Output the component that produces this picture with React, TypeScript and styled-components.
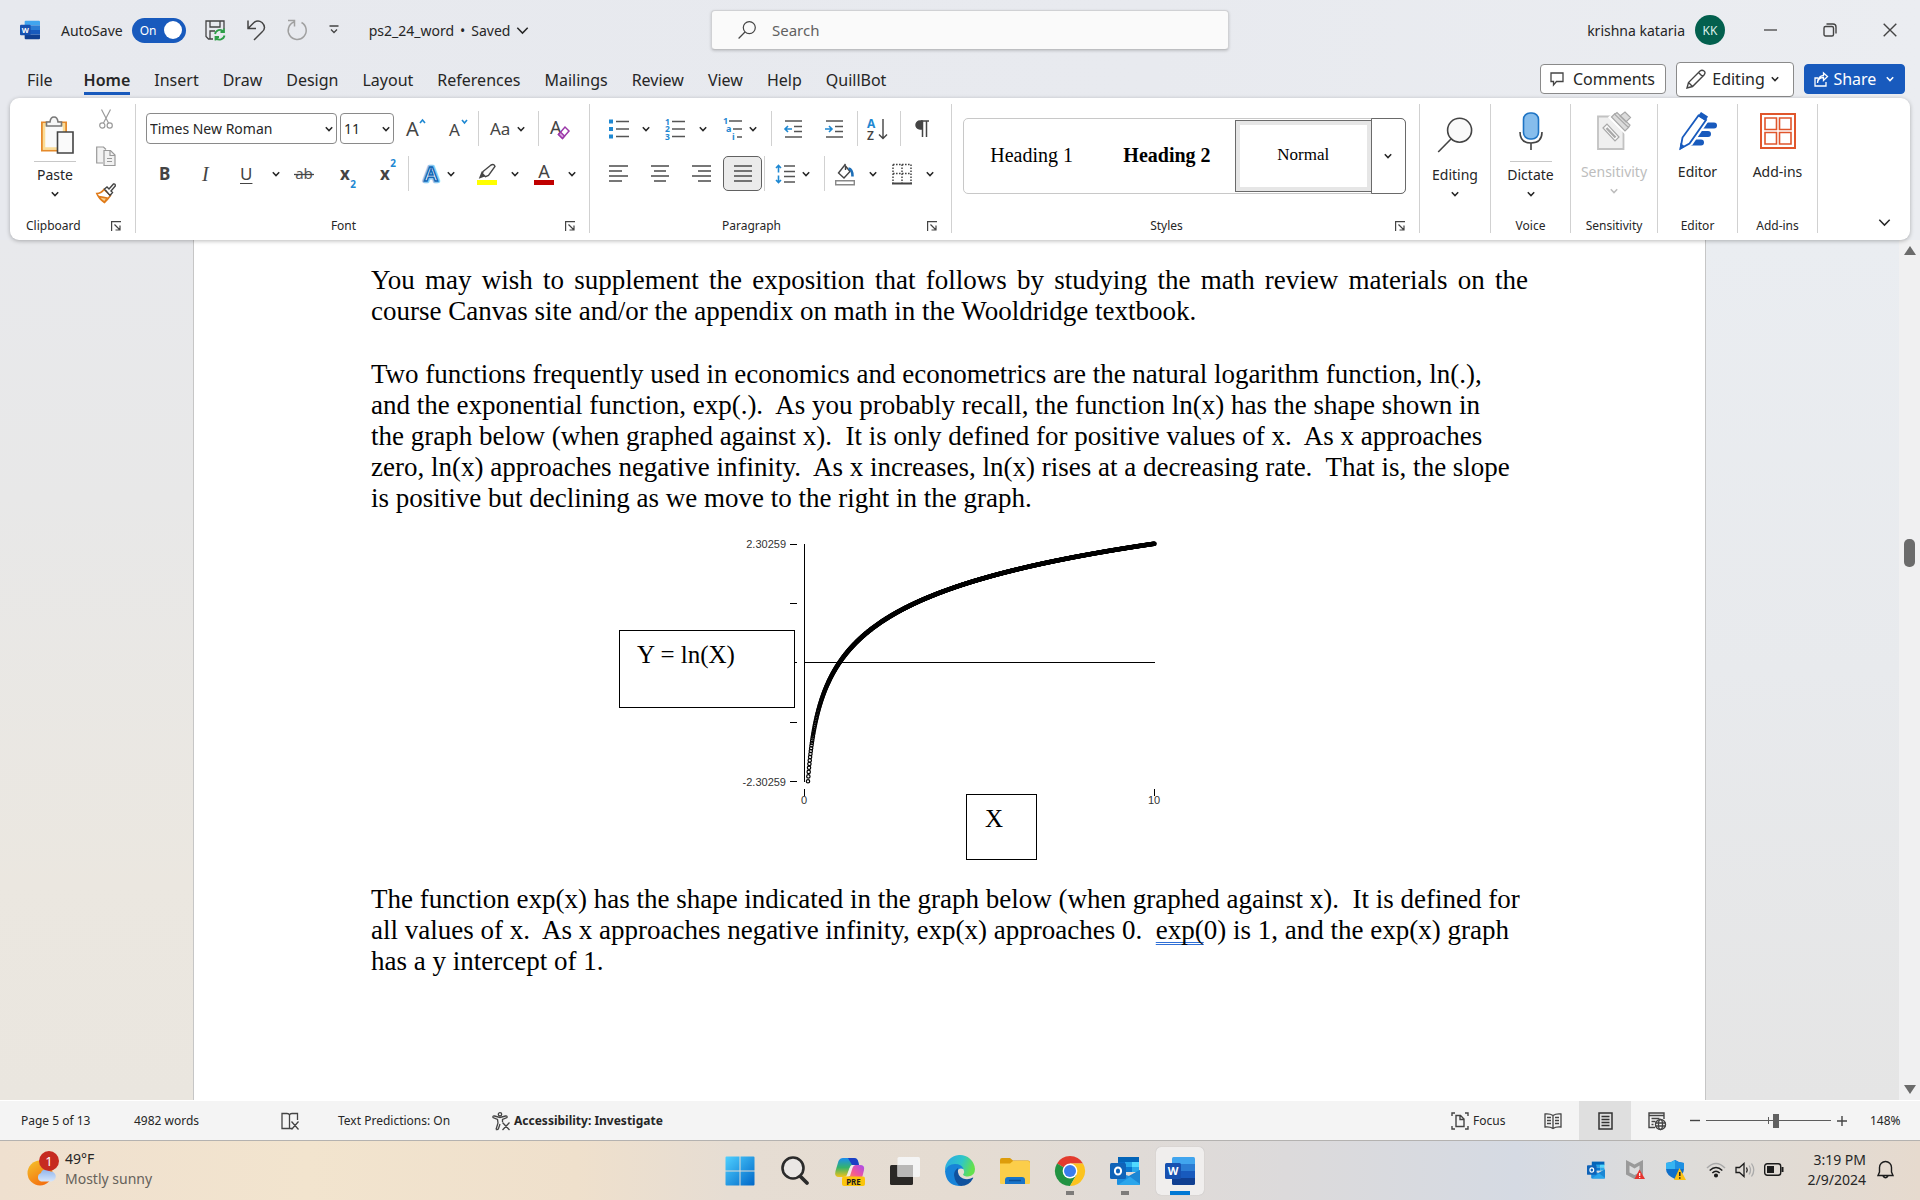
import React from "react";
import styled, { createGlobalStyle, css } from "styled-components";

const ui = `"Noto Sans", "Open Sans", sans-serif`;
const serif = `"Liberation Serif", "Times New Roman", serif`;
const ink = "#262626";
const blue = "#185abd";

const Global = createGlobalStyle`
  *, *::before, *::after { box-sizing: border-box; }
  body { margin: 0; font-family: ${ui}; font-size: 14px; color: ${ink}; }
  button, input, select { font: inherit; color: inherit; margin: 0; padding: 0; border: 0; background: none; }
  svg { display: block; flex: none; overflow: visible; }
`;

const Desktop = styled.div`
  display: flex;
  flex-direction: column;
  height: 100vh;
  overflow: hidden;
  background: linear-gradient(90deg, #e7e9ee 0%, #e8eaef 60%, #ebedf1 100%);
`;

/* ---------- title bar ---------- */
const TitleBar = styled.header`
  display: grid;
  grid-template-columns: 711px minmax(200px, 518px) 1fr;
  align-items: center;
  height: 60px;
  flex: none;
`;
const TitleLeft = styled.div`
  display: flex;
  align-items: center;
  padding-left: 20px;
`;
const TitleRight = styled.div`
  display: flex;
  align-items: center;
  justify-content: flex-end;
  padding-right: 23px;
`;
const SwitchLabel = styled.label`
  display: flex;
  align-items: center;
  gap: 9px;
  margin: 0 19px 0 21px;
`;
const Switch = styled.span`
  display: flex;
  align-items: center;
  justify-content: space-between;
  width: 54px;
  height: 25px;
  padding: 0 4px 0 8px;
  border-radius: 13px;
  background: ${blue};
  color: #fff;
  font-size: 12px;
`;
const SwitchInput = styled.input`
  appearance: none;
  width: 18px;
  height: 18px;
  border-radius: 9px;
  background: #fff;
`;
const IconButton = styled.button<{ $w?: number; $h?: number; $ml?: number }>`
  display: flex;
  align-items: center;
  justify-content: center;
  width: ${(p) => p.$w ?? 20}px;
  height: ${(p) => p.$h ?? 35}px;
  margin-left: ${(p) => p.$ml ?? 0}px;
  flex: none;
`;
const FileButton = styled.button`
  display: flex;
  align-items: center;
  gap: 6px;
  margin-left: 30px;
  white-space: nowrap;
`;
const SearchBox = styled.label`
  display: flex;
  align-items: center;
  gap: 16px;
  height: 40px;
  padding: 0 26px;
  border: 1px solid #d0d1d4;
  border-bottom-color: #bdbec1;
  border-radius: 4px;
  background: #fafafa;
  box-shadow: 0 1px 3px rgba(0, 0, 0, 0.18);
`;
const SearchInput = styled.input`
  flex: 1;
  min-width: 0;
  outline: 0;
  font-size: 15px;
  &::placeholder { color: #616161; opacity: 1; }
`;
const Avatar = styled.span`
  display: grid;
  place-items: center;
  width: 30px;
  height: 30px;
  margin-left: 10px;
  border-radius: 50%;
  background: #03604e;
  color: #d8efe9;
  font-size: 12px;
`;

/* ---------- tabs ---------- */
const TabBar = styled.div`
  display: flex;
  align-items: center;
  justify-content: space-between;
  height: 38px;
  padding: 0 15px 0 27px;
  flex: none;
`;
const Tabs = styled.nav`
  display: flex;
  gap: 24px;
`;
const Tab = styled.button<{ $active?: boolean; $first?: boolean }>`
  height: 38px;
  padding-top: 1px;
  font-size: 16px;
  margin-right: ${(p) => (p.$first ? 7 : 0)}px;
  ${(p) =>
    p.$active &&
    css`
      font-weight: 600;
      background: linear-gradient(${blue}, ${blue}) 0 32px / 100% 3px no-repeat;
    `}
`;
const Actions = styled.div`
  display: flex;
  align-items: center;
  gap: 10px;
`;
const Action = styled.button<{ $w: number; $tall?: boolean; $primary?: boolean }>`
  display: flex;
  align-items: center;
  justify-content: space-between;
  width: ${(p) => p.$w}px;
  height: ${(p) => (p.$tall ? 35 : 30)}px;
  padding: 0 ${(p) => (p.$tall ? 14 : 10)}px 0 9px;
  border: 1px solid ${(p) => (p.$primary ? blue : "#8a8a8a")};
  border-radius: 4px;
  background: ${(p) => (p.$primary ? blue : "#fff")};
  color: ${(p) => (p.$primary ? "#fff" : ink)};
  font-size: 16px;
`;

/* ---------- ribbon ---------- */
const Ribbon = styled.section`
  position: relative;
  z-index: 1;
  display: flex;
  height: 142px;
  margin: 0 10px;
  padding: 6px 0 7px;
  border-radius: 9px;
  background: #fff;
  box-shadow: 0 1px 4px rgba(0, 0, 0, 0.28);
  flex: none;
`;
const Group = styled.div<{ $w?: number }>`
  display: flex;
  flex-direction: column;
  justify-content: space-between;
  ${(p) => (p.$w ? `width: ${p.$w}px; flex: none;` : "flex: 1; min-width: 0;")}
  border-right: 1px solid #d1d1d1;
`;
const GroupFoot = styled.div<{ $launcher?: boolean }>`
  display: flex;
  align-items: center;
  height: 14px;
  padding-right: ${(p) => (p.$launcher ? 14 : 0)}px;
  font-size: 12px;
  line-height: 14px;
  white-space: nowrap;
`;
const FootName = styled.span<{ $left?: boolean }>`
  flex: 1;
  text-align: ${(p) => (p.$left ? "left" : "center")};
  padding: 0 ${(p) => (p.$left ? 0 : 14)}px 0 ${(p) => (p.$left ? 16 : 0)}px;
`;
const PlainName = styled.span`
  flex: 1;
  text-align: center;
`;
const Rows = styled.div`
  display: flex;
  flex-direction: column;
  gap: 10px;
  padding-top: 7px;
`;
const Row = styled.div`
  display: flex;
  align-items: center;
  height: 35px;
`;
const Bar = styled.span<{ $ml: number }>`
  width: 1px;
  height: 35px;
  margin-left: ${(p) => p.$ml}px;
  background: #d1d1d1;
`;
const Tool = styled.button<{ $w?: number; $ml: number }>`
  display: flex;
  align-items: center;
  justify-content: space-between;
  width: ${(p) => p.$w ?? 20}px;
  height: 35px;
  margin-left: ${(p) => p.$ml}px;
  font-size: 17px;
  line-height: 20px;
  flex: none;
  white-space: nowrap;
`;
const Pressed = styled(Tool)`
  justify-content: center;
  border: 1px solid #616161;
  border-radius: 5px;
  background: #ebebeb;
`;
const Glyph = styled.span<{ $bold?: boolean; $italic?: boolean; $underline?: boolean }>`
  font-weight: ${(p) => (p.$bold ? 700 : 400)};
  ${(p) => p.$italic && `font-family: ${serif}; font-style: italic; font-size: 20px;`}
  ${(p) => p.$underline && "text-decoration: underline; text-underline-offset: 3px;"}
  color: #444;
`;
const Script = styled.span<{ $up?: boolean }>`
  align-self: ${(p) => (p.$up ? "flex-start" : "flex-end")};
  color: #1e88d2;
  font-size: 10px;
  font-weight: 700;
  line-height: 14px;
`;
const ComboWrap = styled.label<{ $w: number; $ml: number }>`
  display: grid;
  align-items: center;
  width: ${(p) => p.$w}px;
  height: 31px;
  margin-left: ${(p) => p.$ml}px;
  border: 1px solid #8a8a8a;
  border-radius: 4px;
  & > * { grid-area: 1 / 1; }
  & > svg { justify-self: end; margin-right: 3px; pointer-events: none; }
`;
const Combo = styled.select`
  appearance: none;
  width: 100%;
  height: 100%;
  padding-left: 3px;
`;
const ClipArea = styled.div`
  display: flex;
  gap: 20px;
  padding-left: 24px;
`;
const ClipSide = styled.div`
  display: flex;
  flex-direction: column;
  gap: 7px;
`;
const Big = styled.button<{ $muted?: boolean }>`
  display: flex;
  flex-direction: column;
  align-items: center;
  color: ${(p) => (p.$muted ? "#bdbdbd" : ink)};
  white-space: nowrap;
`;
const Art = styled.span<{ $low?: boolean; $rule?: boolean; $gap?: boolean }>`
  display: flex;
  align-items: center;
  justify-content: center;
  width: 42px;
  height: 58px;
  padding: ${(p) => (p.$low ? "5px 0 0" : "0 0 3px")};
  border-bottom: 1px solid ${(p) => (p.$rule ? "#c8c8c8" : "transparent")};
  margin-bottom: ${(p) => (p.$gap ? 3 : 0)}px;
`;
const BigText = styled.span`
  margin-bottom: 5px;
  line-height: 20px;
`;
const Gallery = styled.div`
  display: flex;
  height: 76px;
  margin: 14px 13px 0 11px;
  border: 1px solid #c8c8c8;
  border-radius: 5px;
`;
const StyleItem = styled.button<{ $bold?: boolean; $selected?: boolean }>`
  flex: 1;
  min-width: 0;
  padding-bottom: 2px;
  font-family: ${serif};
  font-size: ${(p) => (p.$selected ? 17 : 20)}px;
  font-weight: ${(p) => (p.$bold ? 700 : 400)};
  color: #000;
  ${(p) =>
    p.$selected &&
    css`
      margin: 1px 0;
      border: 1px solid #6a6a6a;
      box-shadow: inset 0 0 0 4px #e6e6e6;
    `}
`;
const GalleryMore = styled.button`
  display: grid;
  place-items: center;
  width: 35px;
  margin: -1px;
  border: 1px solid #6a6a6a;
  border-radius: 0 5px 5px 0;
`;
const Collapse = styled.button`
  display: flex;
  align-items: flex-end;
  justify-content: flex-end;
  width: 92px;
  padding: 0 19px 4px 0;
`;

/* ---------- document ---------- */
const Workspace = styled.main`
  display: flex;
  flex: 1;
  min-height: 0;
  overflow: hidden;
  background:
    linear-gradient(180deg, #e8e9ec 0%, #e8e8e8 30%, #ebe7e0 75%, #eae6df 100%) 0 0 / 50% 100% no-repeat,
    linear-gradient(180deg, #eaedf1 0%, #e8eaed 50%, #e5e5e5 100%) 100% 0 / 50% 100% no-repeat;
`;
const Page = styled.article`
  flex: 1;
  margin: 0 193px;
  padding: 25px 177px 0;
  border: solid #c6c6c6;
  border-width: 0 1px;
  background: #fff;
  color: #000;
  font-family: ${serif};
  font-size: 27px;
  line-height: 31px;
`;
const Para = styled.p<{ $spaced?: boolean }>`
  margin: 0 0 ${(p) => (p.$spaced ? 32 : 0)}px;
`;
const Line = styled.span<{ $justified?: boolean }>`
  display: block;
  ${(p) =>
    p.$justified
      ? "text-align: justify; text-align-last: justify;"
      : "white-space: pre;"}
`;
const Grammar = styled.span`
  text-decoration: underline double #2f6fd6 1px;
  text-decoration-skip-ink: none;
  text-underline-offset: 3px;
`;
const Figure = styled.figure`
  margin: 0;
  padding: 6px 0 14px 229px;
`;
const Scroll = styled.div`
  display: flex;
  flex-direction: column;
  align-items: center;
  width: 21px;
  padding: 6px 0;
  background: #f0f0f1;
`;
const Thumb = styled.div`
  width: 11px;
  height: 28px;
  margin: 284px 0 auto;
  border-radius: 5px;
  background: #6b6b6b;
`;

/* ---------- status bar ---------- */
const StatusBar = styled.footer`
  display: flex;
  align-items: center;
  justify-content: space-between;
  height: 41px;
  border-top: 1px solid #fff;
  border-bottom: 1px solid #b4b2b0;
  background: #f4f4f4;
  font-size: 12px;
  flex: none;
`;
const StatusSide = styled.div`
  display: flex;
  align-items: center;
  height: 100%;
  white-space: nowrap;
`;
const StatusItem = styled.button<{ $ml?: number; $bold?: boolean; $w?: number }>`
  display: flex;
  align-items: center;
  gap: 4px;
  margin-left: ${(p) => p.$ml ?? 0}px;
  font-weight: ${(p) => (p.$bold ? 700 : 400)};
  ${(p) => p.$w && `width: ${p.$w}px;`}
`;
const ViewButton = styled.button<{ $on?: boolean }>`
  display: grid;
  place-items: center;
  width: 52px;
  height: 100%;
  background: ${(p) => (p.$on ? "#dfdfdf" : "none")};
`;
const Zoom = styled.input`
  appearance: none;
  width: 125px;
  height: 14px;
  margin: 0 6px;
  background:
    linear-gradient(#5c5c5c, #5c5c5c) 50% 50% / 1px 7px no-repeat,
    linear-gradient(#5c5c5c, #5c5c5c) 0 50% / 100% 1px no-repeat;
  &::-webkit-slider-thumb {
    appearance: none;
    width: 6px;
    height: 14px;
    background: #616161;
  }
`;

/* ---------- taskbar ---------- */
const Taskbar = styled.footer`
  display: grid;
  grid-template-columns: 1fr auto 1fr;
  align-items: center;
  height: 59px;
  flex: none;
  background: linear-gradient(90deg, #efe0cf 0%, #f2e4ce 16%, #efe0cc 30%, #e6ddd3 38%, #e5dcd2 50%, #dcdadb 67%, #d5dae3 79%, #dedcd9 88%, #e6dace 100%);
`;
const Weather = styled.button`
  display: flex;
  align-items: center;
  gap: 5px;
  padding: 0 0 3px 26px;
  text-align: left;
  line-height: 20px;
`;
const Stack = styled.span`
  display: flex;
  flex-direction: column;
`;
const Soft = styled.span`
  color: #66615a;
`;
const Apps = styled.div`
  display: flex;
  gap: 7px;
`;
const AppButton = styled.button<{ $open?: boolean; $active?: boolean }>`
  display: flex;
  align-items: center;
  justify-content: center;
  width: 48px;
  height: 48px;
  border-radius: 5px;
  ${(p) =>
    p.$open &&
    "background: linear-gradient(#7e7c7a, #7e7c7a) 50% 100% / 8px 4px no-repeat;"}
  ${(p) =>
    p.$active &&
    "background: linear-gradient(#0078d4, #0078d4) 50% 100% / 20px 4px no-repeat, #f0eeed; box-shadow: 0 0 1px #aaa;"}
`;
const Tray = styled.div`
  display: flex;
  align-items: center;
  justify-content: flex-end;
  padding: 0 26px 2px 0;
`;
const Clock = styled.button`
  margin: 0 11px 0 24px;
  text-align: right;
  line-height: 20px;
`;

/* ---------- icons ---------- */
const Chevron = ({ size = 8, color = "#262626" }: { size?: number; color?: string }) => (
  <svg width={size} height={size} viewBox="0 0 8 8" fill="none" stroke={color} strokeWidth={size > 8 ? 0.9 : 1.5}>
    <path d="M.8 2.3 4 5.6l3.2-3.3" />
  </svg>
);
const Ico = ({ w = 20, h = 20, box, children, sw = 1.4, color = "#444" }: any) => (
  <svg width={w} height={h} viewBox={box ?? `0 0 ${w} ${h}`} fill="none" stroke={color} strokeWidth={sw}>
    {children}
  </svg>
);
const LauncherIcon = () => (
  <Ico w={10} h={10} sw={1.2}>
    <path d="M.6 10V.6H10M3.5 3.5l5 5M9 4.5V9H4.5" />
  </Ico>
);
const letter = { stroke: "none", fontFamily: ui, fontWeight: 700 } as const;

const WordIcon = ({ size = 20 }) => (
  <svg width={size} height={size} viewBox="0 0 30 30">
    <path d="M7 2.500Q7 1 8.500 1h20Q30 1 30 2.500V8H7z" fill="#41a5ee" />
    <path d="M7 8h23v7H7z" fill="#2b7cd3" />
    <path d="M7 15h23v7H7z" fill="#185abd" />
    <path d="M7 22h23v5.500Q30 29 28.500 29h-20Q7 29 7 27.500z" fill="#103f91" />
    <rect y="7" width="16" height="16" rx="1.500" fill="#1751b0" />
    <text x="8" y="19" fontSize="11" textAnchor="middle" fill="#fff" {...letter}>W</text>
  </svg>
);
const OutlookIcon = ({ size = 30 }) => (
  <svg width={size} height={size} viewBox="0 0 30 30">
    <path d="M8 1h21v6H8z" fill="#0364b8" />
    <path d="M8 6h7v10H8z" fill="#0a6cc8" />
    <path d="M15 6h7v5h-7z" fill="#28a8ea" />
    <path d="M22 6h7v5h-7z" fill="#50d9ff" />
    <path d="M15 11h7v5h-7z" fill="#0a78d0" />
    <path d="M22 11h7v5h-7z" fill="#28a8ea" />
    <path d="M7 16l12 4 11-6v14q0 1-1 1H8q-1 0-1-1z" fill="#1b8fe0" />
    <path d="M8 29l22-15v14q0 1-1 1z" fill="#2ba6ec" />
    <path d="M30 14 19 20l11 8z" fill="#1273c4" opacity=".6" />
    <rect y="7" width="16" height="16" rx="1.500" fill="#0f63b8" />
    <ellipse cx="8" cy="15" rx="3.100" ry="3.600" fill="none" stroke="#fff" strokeWidth="2" />
  </svg>
);
const SaveIcon = () => (
  <Ico w={20} h={20} sw={1.3}>
    <path d="M8 19H3.500L1 16.500V1h18v8M5 1v6h10V1M5 19v-8h5" />
    <g stroke="#2e9e48" strokeWidth="1.800">
      <path d="M10 14a5 5 0 0 1 8.500-2.500M19 8.500v3.500h-3.500M19.500 15.500A5 5 0 0 1 11 18M10.500 20.500V17H14" />
    </g>
  </Ico>
);
const Lens = ({ size = 18, sw = 1.2, fill = "none" }: any) => (
  <svg width={size} height={size} viewBox="0 0 18 18" fill={fill} stroke="#444" strokeWidth={sw}>
    <circle cx="11.300" cy="6.600" r="6" />
    <path d="M7 11 .6 17.500" />
  </svg>
);
const LineIcon = ({ rows }: { rows: [number, number][] }) => (
  <Ico w={20} h={20} sw={1.6} color="#555">
    {rows.map(([a, b], i) => (
      <path key={i} d={`M${a} ${2 + i * 5}H${b}`} />
    ))}
  </Ico>
);
const PasteIcon = () => (
  <Ico w={35} h={38} sw={1.600} box="-2 0 35 38">
    <path d="M2 6.500h24v28H2z" fill="#fff" stroke="#e58a2b" strokeWidth="2" />
    <path d="M4 8.500h20v24H4z" stroke="#fbdc96" strokeWidth="2.500" fill="#fafafa" />
    <path d="M6.500 10V6H10Q10.500 1 14 1t4 5h3.500v4z" fill="#f7f7f7" stroke="#777" />
    <path d="M17.500 16h15.500v21H17.500z" fill="#fafafa" stroke="#444" />
  </Ico>
);
const CutIcon = () => (
  <Ico w={14} h={20} sw={1.2} color="#9a9a9a">
    <path d="M2.500.5 9.500 14M11.500.5 4.500 14" />
    <circle cx="3.300" cy="16.500" r="2.600" />
    <circle cx="10.700" cy="16.500" r="2.600" />
  </Ico>
);
const CopyIcon = () => (
  <Ico w={20} h={20} sw={1.2} color="#999">
    <path d="M7 17H.7V1H7.500L10 3.500" fill="#f2f2f2" />
    <path d="M8 4.500h6.500L19 9v10.500H8z" fill="#f2f2f2" />
    <path d="M14 5v4.500h5M11 12.500h5M11 15.500h5" />
  </Ico>
);
const PainterIcon = () => (
  <Ico w={20} h={20} sw={1.4}>
    <path d="M.8 10.500Q5 10.500 8 6.500l6.500 6Q12 16 8.500 19.500 3 16 .8 10.500z" fill="#fff" stroke="#e07b1a" strokeWidth="1.600" />
    <path d="M3 13.500q5 1 8 1.500l-2.500 4Q5 17 3 13.500z" fill="#f9cf8a" stroke="#e07b1a" strokeWidth="1.400" />
    <path d="M8.500 6 11 4l2 2L17.500 1Q19.500.5 19.300 3L15 8l1.500 1.500-2.500 3z" fill="#fff" />
  </Ico>
);
const GrowA = ({ up }: { up?: boolean }) => (
  <svg width="20" height="22" viewBox="0 0 20 22">
    <text x={up ? 0 : 1} y="18" fontSize={up ? 20 : 17} fill="#444" fontFamily={ui}>A</text>
    <path d={up ? "M14 5l2.500-3L19 5" : "M14 2l2.500 3L19 2"} fill="none" stroke="#1e88d2" strokeWidth="1.600" />
  </svg>
);
const ClearIcon = () => (
  <svg width="20" height="22" viewBox="0 0 20 22">
    <text x="0" y="16" fontSize="18" fill="#444" fontFamily={ui}>A</text>
    <path d="M8.500 16.500 15 9l4 4-6.500 7.500z" fill="#fff" stroke="#9b38a8" strokeWidth="1.500" />
    <path d="M8.500 16.500l2-2.500 4 4-2 2.500z" fill="#d9a4e0" stroke="#9b38a8" strokeWidth="1.500" />
  </svg>
);
const EffectA = () => (
  <svg width="20" height="22" viewBox="0 0 20 22">
    <text x="10" y="18" fontSize="20" textAnchor="middle" fill="#fff" stroke="#8cc8f0" strokeWidth="4.500" strokeLinejoin="round" fontFamily={ui} fontWeight="600">A</text>
    <text x="10" y="18" fontSize="20" textAnchor="middle" fill="#fff" stroke="#1367b5" strokeWidth="1.500" fontFamily={ui} fontWeight="600">A</text>
  </svg>
);
const HighlightIcon = () => (
  <Ico w={20} h={22} sw={1.4}>
    <path d="M3 14.500 5 9.500l3.500 3z" fill="#444" />
    <path d="M6 8.500 14 2q3-1.500 4 1.500L11.500 12.500l-3 1.200-3-3z" fill="#fafafa" />
    <path d="M0 17h20v5H0z" fill="#ffff00" stroke="none" />
  </Ico>
);
const ColorA = () => (
  <svg width="20" height="22" viewBox="0 0 20 22">
    <text x="10" y="14.500" fontSize="18" textAnchor="middle" fill="#444" fontFamily={ui}>A</text>
    <path d="M0 17h20v5H0z" fill="#c00000" />
  </svg>
);
const ListIcon = ({ marks }: { marks?: string[] }) => (
  <Ico w={20} h={22} sw={1.6} color="#555">
    <path d="M7 3.500h13M7 11h13M7 18.500h13" />
    {[0, 1, 2].map((i) =>
      marks ? (
        <text key={i} x="0" y={6.500 + i * 7.500} fontSize="8.500" fill="#1e88d2" {...letter}>{marks[i]}</text>
      ) : (
        <rect key={i} x="0" y={1.500 + i * 7.500} width="4" height="4" fill="#1e88d2" stroke="none" />
      )
    )}
  </Ico>
);
const MultiIcon = () => (
  <Ico w={20} h={24} sw={1.6} color="#555">
    <path d="M6 4h13M10 12h9M14 20h5" />
    <g fill="#1e88d2" fontSize="9" {...letter}>
      <text x="0" y="7">1</text>
      <text x="3" y="15">a</text>
      <text x="9" y="23">i</text>
    </g>
  </Ico>
);
const IndentIcon = ({ out }: { out?: boolean }) => (
  <Ico w={19} h={20} sw={1.6} color="#555">
    <path d="M1 2h17M10 7.500h8M10 12.500h8M1 18h17" />
    <path d={out ? "M8 10H1M4 7l-3 3 3 3" : "M0 10h7M4 7l3 3-3 3"} stroke="#1e88d2" />
  </Ico>
);
const SortIcon = () => (
  <Ico w={21} h={24} sw={1.4}>
    <text x="0" y="10.500" fontSize="12" fill="#1e88d2" {...letter}>A</text>
    <text x="0" y="23" fontSize="12" fill="#444" {...letter} fontWeight={600}>Z</text>
    <path d="M16 2v19.500M12 17.500l4 4 4-4" />
  </Ico>
);
const PilcrowIcon = () => (
  <Ico w={14} h={17} sw={1.5}>
    <path d="M7 1H5a4 4 0 0 0 0 8h2z" fill="#444" />
    <path d="M6 1h8M7.500 1v16M11.500 1v16" />
  </Ico>
);
const SpacingIcon = () => (
  <Ico w={20} h={20} sw={1.6} color="#555">
    <path d="M9 2h11M9 7.500h11M9 12.500h11M9 18h11" />
    <path d="M3.500 1v7.500M1 4l2.500-2.500L6 4M3.500 11.500V19M1 16l2.500 2.500L6 16" stroke="#1e88d2" />
  </Ico>
);
const ShadeIcon = () => (
  <Ico w={20} h={22} sw={1.4}>
    <path d="M9 3 3.500 10 9 15l6-6.500L10.500 3v4M9 3l1.500-2" />
    <path d="M13.500 5.500q4 .5 4 8" stroke="#1e6fb8" strokeWidth="2.600" />
    <path d="M.7 17.700h18.600v4H.7z" stroke="#888" fill="#fff" />
  </Ico>
);
const BorderIcon = () => (
  <Ico w={20} h={22} sw={1.5}>
    <path d="M1 1.500h18M1 1.500V20M10 1.500V20M19 1.500V20M1 10.500h18" strokeDasharray="1.600 1.400" />
    <path d="M0 20.500h20" strokeWidth="2" />
  </Ico>
);
const MicIcon = () => (
  <Ico w={24} h={38} sw={1.6}>
    <rect x="4.500" y="1" width="15" height="26" rx="6.500" fill="#86bdec" stroke="#1e74c4" />
    <path d="M1 20q0 11 11 11t11-11M12 31v7" />
  </Ico>
);
const SensIcon = () => (
  <Ico w={34} h={38} sw={1.2} color="#a8a8a8">
    <path d="M1 4.500h25.500V37H1z" fill="#efefef" stroke="#c2c2c2" strokeWidth="1.800" />
    <path d="M6 16l4-4 12 13-4 4z" fill="#fafafa" />
    <path d="M9.500 16l9 9.500" strokeWidth="2.400" />
    <path d="M14 5.500 22 0h8l5 6-7 13.500z" fill="#fff" stroke="#fff" strokeWidth="4" />
    <path d="M14.500 5l3-3L31.500 15.500 28 19zM17.500 2.500l2.500-2L33 13l-1.500 2.500M23 4l5-4 5.500 5.500L29 10z" fill="#dcdcdc" />
  </Ico>
);
const EditorIcon = () => (
  <svg width="38" height="38" viewBox="0 0 38 38">
    <g stroke={blue} strokeWidth="6" strokeLinecap="round">
      <path d="M24 13.500h11M18 22h11M12 30.500h10" />
    </g>
    <path d="M1.500 36.500 3 25.500 19.500 3l8.500 5-16 23.500z" fill="#fff" stroke="#fff" strokeWidth="4" />
    <path d="M1.500 36.500 3.500 25.500 19.500 3.500l7.500 4.500L10.500 31.500z" fill="#fff" stroke={blue} strokeWidth="1.800" />
    <path d="M19 4 22 0l7 4.500-2.500 4.500zM.5 38l1-7 4.500 3.500z" fill={blue} />
  </svg>
);
const AddinsIcon = () => (
  <Ico w={36} h={36} sw={2} color="#e0562c">
    <path d="M1 1h34v34H1z" />
    <path d="M5 5h11.500v11.500H5zM19.500 5H31v11.500H19.500zM5 19.500h11.500V31H5zM19.500 19.500H31V31H19.500z" strokeWidth="1.600" />
  </Ico>
);

/* y = ln(x) plotted with one open marker for each sample */
const samples = Array.from({ length: 991 }, (_, i) => 0.1 + i * 0.01);
const LogChart = () => (
  <svg width="600" height="350" viewBox="0 0 600 350" role="img" aria-label="Graph of Y = ln(X)">
    <g stroke="#000" strokeWidth="1" shapeRendering="crispEdges">
      <path d="M204.500 24v238M204.500 142.500h350" />
      <path d="M190 24.500h7M190 83.500h7M190 142.500h7M190 202.500h7M190 261.500h7M204.500 269v7M554.500 269v7" />
    </g>
    <g fontFamily={`"Liberation Sans", Arial, sans-serif`} fontSize="11" fill="#333">
      <text x="186" y="28" textAnchor="end">2.30259</text>
      <text x="186" y="266" textAnchor="end">-2.30259</text>
      <text x="204" y="284" textAnchor="middle">0</text>
      <text x="554" y="284" textAnchor="middle">10</text>
    </g>
    <g fill="none" stroke="#000" strokeWidth="1.200">
      {samples.map((x) => (
        <circle key={x} cx={204.5 + x * 35} cy={142.5 - Math.log(x) * 51.6} r="1.700" />
      ))}
    </g>
    <g fill="#fff" stroke="#000" strokeWidth="1" shapeRendering="crispEdges">
      <path d="M19.500 110.500h175v77h-175zM366.500 274.500h70v65h-70z" />
    </g>
    <g fontFamily={serif} fontSize="25" fill="#000">
      <text x="37" y="143">Y = ln(X)</text>
      <text x="385" y="307">X</text>
    </g>
  </svg>
);

const ProofIcon = () => (
  <Ico w={18} h={18} sw={1.3}>
    <path d="M8.500 3v13.500M8.500 16.500H1V1.500h5q2 0 2.500 1.500.5-1.500 2.500-1.500h5.500V8M8.500 16.500H11M10.500 9.500l7 8M17.500 9.500l-7 8" />
  </Ico>
);
const AccessIcon = () => (
  <Ico w={18} h={18} sw={1.3}>
    <circle cx="8" cy="2.300" r="1.700" />
    <path d="M4 17.500 6 11 5.500 7.500 1 5.500Q.5 3.500 2.500 4L8 5.500 13.500 4q2-.5 1.500 1.500L10.500 7.500V10M4 17.500q2 .5 2.500-1L8 12M10.500 10.500l7 7.500M17.500 10.500l-7 7.500" />
  </Ico>
);
const FocusIcon = () => (
  <Ico w={18} h={18} sw={1.4}>
    <path d="M4 1H1v3M14 1h3v3M4 17H1v-3M14 17h3v-3M5 3.500h4.500L13 7v7.500H5zM9 3.500V7.500h4" />
  </Ico>
);
const ReadIcon = () => (
  <Ico w={18} h={16} sw={1.300}>
    <path d="M9 2.500Q6 .5 1 1v13q5-.5 8 1.500 3-2 8-1.500V1q-5-.5-8 1.500zM9 2.500v13M3 4.500h4M3 7.500h4M3 10.500h4M11 4.500h4M11 7.500h4M11 10.500h4" />
  </Ico>
);
const PrintIcon = () => (
  <Ico w={15} h={18} sw={1.5} color="#333">
    <path d="M1 1h13v16H1zM3.500 4.500h8M3.500 7.500h8M3.500 10.500h8M3.500 13.500h8" />
  </Ico>
);
const WebIcon = () => (
  <Ico w={18} h={18} sw={1.4}>
    <path d="M7 15.500H1V1h15v6M1 3.500h15M3.500 6.500h8M3.500 9.500h4M3.500 12.500h2" />
    <circle cx="12.500" cy="12.500" r="5" fill="#fff" />
    <ellipse cx="12.500" cy="12.500" rx="2" ry="5" />
    <path d="M7.500 11h10M7.500 14h10" />
  </Ico>
);
const WeatherIcon = () => (
  <svg width="34" height="38" viewBox="0 0 34 38">
    <defs>
      <linearGradient id="sun" x1="0" y1="0" x2=".6" y2="1">
        <stop offset="0" stopColor="#f4c42c" />
        <stop offset="1" stopColor="#f4700f" />
      </linearGradient>
      <linearGradient id="cloud" x1="0" y1="0" x2="0" y2="1">
        <stop offset="0" stopColor="#8fb4ec" />
        <stop offset="1" stopColor="#d6e6fb" />
      </linearGradient>
    </defs>
    <circle cx="14" cy="23" r="12.500" fill="url(#sun)" />
    <path d="M15 31.500a4.500 4.500 0 0 1 0-8.500 5 5 0 0 1 9-1.500 4.500 4.500 0 0 1 1.500 10z" fill="url(#cloud)" />
    <circle cx="23" cy="11" r="10" fill="#c62a20" />
    <text x="23" y="16" fontSize="13" textAnchor="middle" fill="#fff" fontFamily={ui}>1</text>
  </svg>
);
const StartIcon = () => (
  <svg width="30" height="30" viewBox="0 0 30 30">
    <defs>
      <linearGradient id="win" x1="0" y1="0" x2="1" y2="1">
        <stop offset="0" stopColor="#4fd0ff" />
        <stop offset="1" stopColor="#0067c8" />
      </linearGradient>
    </defs>
    <path d="M1.500.5h13v14H.5v-13q0-1 1-1zM15.500.5h13q1 0 1 1v13h-14zM.5 15.500h14v14h-13q-1 0-1-1zM15.500 15.500h14v13q0 1-1 1h-13z" fill="url(#win)" />
  </svg>
);
const SearchAppIcon = () => (
  <svg width="28" height="30" viewBox="0 0 28 30" fill="none" stroke="#2b2b2b" strokeLinecap="round">
    <circle cx="12" cy="12" r="10.500" fill="#eae7e5" strokeWidth="2.600" />
    <path d="M19.500 20.500 26 27" strokeWidth="3.800" />
  </svg>
);
const CopilotIcon = () => (
  <svg width="30" height="30" viewBox="0 0 30 30">
    <defs>
      <linearGradient id="cpl" x1="0" y1="0" x2="0" y2="1">
        <stop offset="0" stopColor="#1b8df0" />
        <stop offset=".5" stopColor="#35b36b" />
        <stop offset="1" stopColor="#f2c21a" />
      </linearGradient>
      <linearGradient id="cpr" x1="1" y1="0" x2="0" y2="1">
        <stop offset="0" stopColor="#a64df0" />
        <stop offset=".5" stopColor="#f0569a" />
        <stop offset="1" stopColor="#ff9a3d" />
      </linearGradient>
    </defs>
    <path d="M8 2h11q3 0 4 3l1 4H18q-2 0-3 3l-2.500 7Q11.500 21 8 21H4q-5 0-3.500-6l3-10Q5 2 8 2z" fill="url(#cpl)" />
    <path d="M13 2h6q3 0 4 3l1 4H17z" fill="#1c3fc4" />
    <path d="M20 9h5q5 0 4 5l-1.500 6q-1 4-5 4H11q2-1 3-4l2.500-8Q17.500 9 20 9z" fill="url(#cpr)" />
    <path d="M17 9h3.500q-2 0-3 3l-2.500 8h-3.500l3-8q1-3 2.500-3z" fill="#f1ece8" />
    <rect x="7" y="20.500" width="23" height="9.500" rx="2" fill="#fbc50c" />
    <text x="18.500" y="28.500" fontSize="8" textAnchor="middle" fill="#1b1b1b" {...letter}>PRE</text>
  </svg>
);
const TaskViewIcon = () => (
  <svg width="30" height="28" viewBox="0 0 30 28">
    <rect y="8" width="23" height="20" rx="1.500" fill="#2a2826" />
    <rect x="7.500" width="22.500" height="20" rx="1.500" fill="#f4f4f4" />
    <path d="M7.500 8H23v12H7.500z" fill="#b9b8b7" />
  </svg>
);
const EdgeIcon = () => (
  <svg width="30" height="30" viewBox="0 0 30 30">
    <defs>
      <linearGradient id="edge" x1="0" y1="0" x2="1" y2=".3">
        <stop offset="0" stopColor="#2aa6e6" />
        <stop offset=".6" stopColor="#2fc6c8" />
        <stop offset="1" stopColor="#63e04e" />
      </linearGradient>
    </defs>
    <path d="M0 15A15 15 0 0 1 30 13q0 7-7 7.500-4 0-5-2 2-2 .5-5Q16 9 10 9 3 9 0 15z" fill="url(#edge)" />
    <path d="M0 15q2.500-7 10-7 6.500 0 8.500 5-5.500-2-7 4t6.500 11.500Q15 30 14 30 1 29 0 15z" fill="#1783d8" />
    <path d="M9 19q0-4.500 4-7-1 8 5 10.500 5 2 10-1 .500 0 0 1-4 7.500-12 7.500-6-2-7-11z" fill="#10529e" />
  </svg>
);
const FolderIcon = () => (
  <svg width="30" height="28" viewBox="0 0 30 28">
    <path d="M0 3q0-2 2-2h8l3 2.500h15q2 0 2 2v6H0z" fill="#dd9c0b" />
    <path d="M0 6.500h10l3-2.500h15q2 0 2 2V26q0 1-1 1H1q-1 0-1-1z" fill="#fcce4a" />
    <path d="M5 27v-4q0-3 3-3h14q3 0 3 3v4z" fill="#1874c9" />
    <path d="M9 23.500h12" stroke="#0b4f97" strokeWidth="1.500" />
  </svg>
);
const ChromeIcon = () => (
  <svg width="30" height="30" viewBox="0 0 30 30">
    <path d="M15 15 2 7.500A15 15 0 0 1 28 7.500H15z" fill="#e33b2e" />
    <path d="M15 15 2 7.500A15 15 0 0 0 15 30l6.500-11.250z" fill="#229342" />
    <path d="M15 7.500h13A15 15 0 0 1 15 30l6.500-11.250z" fill="#fcc31e" />
    <circle cx="15" cy="15" r="7.400" fill="#fff" />
    <circle cx="15" cy="15" r="6" fill="#3b7ded" />
  </svg>
);
const McAfeeIcon = () => (
  <svg width="19" height="20" viewBox="0 0 19 20">
    <path d="M0 0l8.500 4.500L17 0v14.500L8.500 19 0 14.500zM3.500 5.500v7L8.500 15l5-2.500v-7l-5 3z" fill="#9a9a9a" fillRule="evenodd" />
    <path d="M13.500 9.500 19 19H8.500z" fill="#e6332d" />
    <path d="M13.700 13v3M13.700 17v1" stroke="#fff" strokeWidth="1.200" />
  </svg>
);
const ShieldIcon = () => (
  <svg width="20" height="20" viewBox="0 0 20 20">
    <path d="M0 3q5 0 9-3 4 3 9 3v6q0 6-9 10Q0 15 0 9z" fill="#0f6fc9" />
    <path d="M0 3q5 0 9-3v9H0z" fill="#35b4f2" />
    <path d="M9 0q4 3 9 3v6H9z" fill="#1e90e2" />
    <path d="M13.500 8 20 20H8z" fill="#fbc015" />
    <path d="M13.800 12v4M13.800 17.200v1.500" stroke="#222" strokeWidth="1.500" />
  </svg>
);
const WifiIcon = () => (
  <Ico w={20} h={16} sw={1.5} color="#1c1c1c">
    <path d="M1 6q9-9 18 0" stroke="#aaa" />
    <path d="M3.700 8.500q6.300-6 12.600 0M6.300 11q3.700-3.500 7.400 0" />
    <circle cx="10" cy="13.500" r="1.300" fill="#1c1c1c" />
  </Ico>
);
const SoundIcon = () => (
  <Ico w={20} h={16} sw={1.3} color="#1c1c1c">
    <path d="M1 5.500h3.500L9 1.500v13l-4.500-4H1zM11.500 5.500q1.500 2.500 0 5" />
    <path d="M14 3.500q3 4.500 0 9M16.500 1.500q4.500 6.500 0 13" stroke="#aaa" />
  </Ico>
);
const BatteryIcon = () => (
  <Ico w={20} h={13} sw={1.4} color="#1c1c1c">
    <rect x=".7" y=".7" width="16" height="11.600" rx="2.500" />
    <path d="M3 3h7v7H3z" fill="#1c1c1c" stroke="none" />
    <path d="M18.500 4v5" strokeWidth="2" />
  </Ico>
);
const BellIcon = () => (
  <Ico w={17} h={20} sw={1.4} color="#1c1c1c">
    <path d="M1 15.500 2.500 12V7.500a6 6 0 0 1 12 0V12l1.500 3.500zM6 16q2.500 3.500 5 0" />
  </Ico>
);

const tabNames = ["File", "Home", "Insert", "Draw", "Design", "Layout", "References", "Mailings", "Review", "View", "Help", "QuillBot"];

const Foot = ({ name, launcher, left }: { name: string; launcher?: boolean; left?: boolean }) => (
  <GroupFoot $launcher={launcher}>
    {launcher ? <FootName $left={left}>{name}</FootName> : <PlainName>{name}</PlainName>}
    {launcher && (
      <button aria-label={`${name} settings`}>
        <LauncherIcon />
      </button>
    )}
  </GroupFoot>
);

const lnText = [
  "Two functions frequently used in economics and econometrics are the natural logarithm function, ln(.),",
  "and the exponential function, exp(.).  As you probably recall, the function ln(x) has the shape shown in",
  "the graph below (when graphed against x).  It is only defined for positive values of x.  As x approaches",
  "zero, ln(x) approaches negative infinity.  As x increases, ln(x) rises at a decreasing rate.  That is, the slope",
  "is positive but declining as we move to the right in the graph.",
];

export default function App() {
  return (
    <>
      <Global />
      <Desktop>
        <TitleBar>
          <TitleLeft>
            <WordIcon />
            <SwitchLabel>
              AutoSave
              <Switch>
                On
                <SwitchInput type="checkbox" role="switch" defaultChecked />
              </Switch>
            </SwitchLabel>
            <IconButton aria-label="Save"><SaveIcon /></IconButton>
            <IconButton aria-label="Undo" $ml={21}>
              <Ico w={20} h={22} sw={1.5}><path d="M2 1.500v8h8M2 9.500 8 3.500Q12 .5 16 3.500 21 8.500 16 13l-8 8" /></Ico>
            </IconButton>
            <IconButton aria-label="Redo" $ml={21}>
              <Ico w={20} h={22} sw={1.5} color="#a0a0a0"><path d="M1 1.500h6.500v6M7 3A9 9 0 1 0 14.500 3.500" /></Ico>
            </IconButton>
            <IconButton aria-label="Customize toolbar" $w={10} $ml={22}>
              <Ico w={10} h={10} sw={1.3}><path d="M.5 1h9M2 4.500 5 7.500l3-3" /></Ico>
            </IconButton>
            <FileButton>
              <span>ps2_24_word</span>
              <span>•</span>
              <span>Saved</span>
              <Chevron size={13} />
            </FileButton>
          </TitleLeft>
          <SearchBox>
            <Lens />
            <SearchInput type="search" placeholder="Search" aria-label="Search" />
          </SearchBox>
          <TitleRight>
            krishna kataria
            <Avatar>KK</Avatar>
            <IconButton aria-label="Minimize" $w={14} $ml={38}><Ico w={13} h={13} sw={1.3}><path d="M0 6h13" /></Ico></IconButton>
            <IconButton aria-label="Restore" $w={14} $ml={46}>
              <Ico w={14} h={14} sw={1.4}><rect x="1" y="3.500" width="9.500" height="9.500" rx="1.500" /><path d="M3.500 1H10q3 0 3 3v6.500" /></Ico>
            </IconButton>
            <IconButton aria-label="Close" $w={14} $ml={46}><Ico w={14} h={14} sw={1.4}><path d="M.7.7l12.600 12.600M13.300.7.7 13.300" /></Ico></IconButton>
          </TitleRight>
        </TitleBar>

        <TabBar>
          <Tabs>
            {tabNames.map((name) => (
              <Tab key={name} $active={name === "Home"} $first={name === "File"}>{name}</Tab>
            ))}
          </Tabs>
          <Actions>
            <Action $w={126}>
              <Ico w={14} h={14} sw={1.3}><path d="M1 1h12v8.500H6.500L3.500 13V9.500H1z" /></Ico>
              Comments
            </Action>
            <Action $w={118} $tall>
              <Ico w={20} h={20} sw={1.4}><path d="M1 19 2.500 13.500 14 2q2-1.500 4 0t0 4L6.500 17.500zM12.500 3.500l4 4M2.500 13.500l4 4" /></Ico>
              Editing <Chevron />
            </Action>
            <Action $w={101} $primary>
              <Ico w={14} h={15} sw={1.3} color="#fff"><path d="M4 6H1v8h11v-4M3.500 11Q4 5.500 9.500 5.500V8.500L13.500 4.500 9.500 1v2.500Q4 4 3.500 11z" /></Ico>
              Share&nbsp; <Chevron color="#fff" />
            </Action>
          </Actions>
        </TabBar>

        <Ribbon>
          <Group $w={126}>
            <ClipArea>
              <Big>
                <Art $low $rule $gap><PasteIcon /></Art>
                <BigText>Paste</BigText>
                <Chevron />
              </Big>
              <ClipSide>
                <IconButton $h={30} aria-label="Cut"><CutIcon /></IconButton>
                <IconButton $h={30} aria-label="Copy"><CopyIcon /></IconButton>
                <IconButton $h={30} aria-label="Format painter"><PainterIcon /></IconButton>
              </ClipSide>
            </ClipArea>
            <Foot name="Clipboard" launcher left />
          </Group>

          <Group $w={454}>
            <Rows>
              <Row>
                <ComboWrap $w={191} $ml={10}>
                  <Combo aria-label="Font"><option>Times New Roman</option></Combo>
                  <Chevron />
                </ComboWrap>
                <ComboWrap $w={54} $ml={3}>
                  <Combo aria-label="Font size"><option>11</option></Combo>
                  <Chevron />
                </ComboWrap>
                <Tool $ml={12} aria-label="Grow font"><GrowA up /></Tool>
                <Tool $ml={22} aria-label="Shrink font"><GrowA /></Tool>
                <Bar $ml={10} />
                <Tool $ml={11} $w={35}><Glyph>Aa</Glyph><Chevron /></Tool>
                <Bar $ml={13} />
                <Tool $ml={11} aria-label="Clear formatting"><ClearIcon /></Tool>
              </Row>
              <Row>
                <Tool $ml={23} $w={12}><Glyph $bold>B</Glyph></Tool>
                <Tool $ml={31} $w={12}><Glyph $italic>I</Glyph></Tool>
                <Tool $ml={26} $w={40}><Glyph $underline>U</Glyph><Chevron /></Tool>
                <Tool $ml={14} aria-label="Strikethrough">
                  <svg width="20" height="20" viewBox="0 0 20 20">
                    <text x="10" y="15" fontSize="15" textAnchor="middle" fill="#555" fontFamily={ui}>ab</text>
                    <path d="M0 10.500h20" stroke="#444" strokeWidth="1.300" />
                  </svg>
                </Tool>
                <Tool $ml={26} $w={16}><Glyph $bold>x</Glyph><Script>2</Script></Tool>
                <Tool $ml={24} $w={16}><Glyph $bold>x</Glyph><Script $up>2</Script></Tool>
                <Bar $ml={12} />
                <Tool $ml={12} $w={34} aria-label="Text effects"><EffectA /><Chevron /></Tool>
                <Tool $ml={22} $w={42} aria-label="Highlight"><HighlightIcon /><Chevron /></Tool>
                <Tool $ml={15} $w={42} aria-label="Font color"><ColorA /><Chevron /></Tool>
              </Row>
            </Rows>
            <Foot name="Font" launcher />
          </Group>

          <Group $w={362}>
            <Rows>
              <Row>
                <Tool $ml={19} $w={41} aria-label="Bullets"><ListIcon /><Chevron /></Tool>
                <Tool $ml={15} $w={42} aria-label="Numbering"><ListIcon marks={["1", "2", "3"]} /><Chevron /></Tool>
                <Tool $ml={16} $w={34} aria-label="Multilevel list"><MultiIcon /><Chevron /></Tool>
                <Bar $ml={14} />
                <Tool $ml={12} $w={19} aria-label="Decrease indent"><IndentIcon out /></Tool>
                <Tool $ml={22} $w={19} aria-label="Increase indent"><IndentIcon /></Tool>
                <Bar $ml={13} />
                <Tool $ml={9} $w={21} aria-label="Sort"><SortIcon /></Tool>
                <Bar $ml={12} />
                <Tool $ml={14} $w={14} aria-label="Show marks"><PilcrowIcon /></Tool>
              </Row>
              <Row>
                <Tool $ml={19} aria-label="Align left"><LineIcon rows={[[0, 19], [0, 13], [0, 19], [0, 13]]} /></Tool>
                <Tool $ml={21} aria-label="Center"><LineIcon rows={[[1, 19], [4, 16], [1, 19], [4, 16]]} /></Tool>
                <Tool $ml={21} aria-label="Align right"><LineIcon rows={[[1, 20], [7, 20], [1, 20], [7, 20]]} /></Tool>
                <Pressed $ml={12} $w={39} aria-label="Justify" aria-pressed="true"><LineIcon rows={[[1, 19], [1, 19], [1, 19], [1, 19]]} /></Pressed>
                <Bar $ml={2} />
                <Tool $ml={10} $w={35} aria-label="Line spacing"><SpacingIcon /><Chevron /></Tool>
                <Bar $ml={14} />
                <Tool $ml={10} $w={42} aria-label="Shading"><ShadeIcon /><Chevron /></Tool>
                <Tool $ml={15} $w={42} aria-label="Borders"><BorderIcon /><Chevron /></Tool>
              </Row>
            </Rows>
            <Foot name="Paragraph" launcher />
          </Group>

          <Group>
            <Gallery>
              <StyleItem>Heading 1</StyleItem>
              <StyleItem $bold>Heading 2</StyleItem>
              <StyleItem $selected>Normal</StyleItem>
              <GalleryMore aria-label="More styles"><Chevron /></GalleryMore>
            </Gallery>
            <Foot name="Styles" launcher />
          </Group>

          <Group $w={71}>
            <Big>
              <Art $low $gap><Lens size={36} sw={0.8} fill="#fafafa" /></Art>
              <BigText>Editing</BigText>
              <Chevron />
            </Big>
          </Group>
          <Group $w={80}>
            <Big>
              <Art $rule $gap><MicIcon /></Art>
              <BigText>Dictate</BigText>
              <Chevron />
            </Big>
            <Foot name="Voice" />
          </Group>
          <Group $w={87}>
            <Big $muted>
              <Art><SensIcon /></Art>
              <BigText>Sensitivity</BigText>
              <Chevron color="#bdbdbd" />
            </Big>
            <Foot name="Sensitivity" />
          </Group>
          <Group $w={80}>
            <Big>
              <Art><EditorIcon /></Art>
              <BigText>Editor</BigText>
            </Big>
            <Foot name="Editor" />
          </Group>
          <Group $w={80}>
            <Big>
              <Art><AddinsIcon /></Art>
              <BigText>Add-ins</BigText>
            </Big>
            <Foot name="Add-ins" />
          </Group>
          <Collapse aria-label="Collapse ribbon"><Chevron size={13} /></Collapse>
        </Ribbon>

        <Workspace>
          <Page>
            <Para $spaced>
              <Line $justified>You may wish to supplement the exposition that follows by studying the math review materials on the</Line>
              <Line>course Canvas site and/or the appendix on math in the Wooldridge textbook.</Line>
            </Para>
            <Para>
              {lnText.map((line) => (
                <Line key={line}>{line}</Line>
              ))}
            </Para>
            <Figure>
              <LogChart />
            </Figure>
            <Para>
              <Line>{"The function exp(x) has the shape indicated in the graph below (when graphed against x).  It is defined for"}</Line>
              <Line>
                {"all values of x.  As x approaches negative infinity, exp(x) approaches 0.  "}
                <Grammar>exp(</Grammar>
                {"0) is 1, and the exp(x) graph"}
              </Line>
              <Line>has a y intercept of 1.</Line>
            </Para>
          </Page>
          <Scroll>
            <Ico w={12} h={9} color="none"><path d="M6 0 12 9H0z" fill="#6b6b6b" /></Ico>
            <Thumb />
            <Ico w={12} h={9} color="none"><path d="M6 9 12 0H0z" fill="#6b6b6b" /></Ico>
          </Scroll>
        </Workspace>

        <StatusBar>
          <StatusSide>
            <StatusItem $ml={21} $w={113}>Page 5 of 13</StatusItem>
            <StatusItem $w={147}>4982 words</StatusItem>
            <StatusItem $w={57} aria-label="Proofing"><ProofIcon /></StatusItem>
            <StatusItem $w={154}>Text Predictions: On</StatusItem>
            <StatusItem $bold><AccessIcon />Accessibility: Investigate</StatusItem>
          </StatusSide>
          <StatusSide>
            <StatusItem $w={76}><FocusIcon />Focus</StatusItem>
            <ViewButton aria-label="Read mode"><ReadIcon /></ViewButton>
            <ViewButton $on aria-label="Print layout"><PrintIcon /></ViewButton>
            <ViewButton aria-label="Web layout"><WebIcon /></ViewButton>
            <StatusItem $ml={7} aria-label="Zoom out"><Ico w={10} h={10}><path d="M0 4.500h10" /></Ico></StatusItem>
            <Zoom type="range" min={0} max={100} defaultValue={56} aria-label="Zoom" />
            <StatusItem aria-label="Zoom in"><Ico w={10} h={10}><path d="M0 5h10M5 0v10" /></Ico></StatusItem>
            <StatusItem $ml={23} $w={50}>148%</StatusItem>
          </StatusSide>
        </StatusBar>

        <Taskbar>
          <Weather>
            <WeatherIcon />
            <Stack>
              <span>49°F</span>
              <Soft>Mostly sunny</Soft>
            </Stack>
          </Weather>
          <Apps>
            <AppButton aria-label="Start"><StartIcon /></AppButton>
            <AppButton aria-label="Search"><SearchAppIcon /></AppButton>
            <AppButton aria-label="Copilot"><CopilotIcon /></AppButton>
            <AppButton aria-label="Task view"><TaskViewIcon /></AppButton>
            <AppButton aria-label="Edge"><EdgeIcon /></AppButton>
            <AppButton aria-label="File Explorer"><FolderIcon /></AppButton>
            <AppButton aria-label="Chrome" $open><ChromeIcon /></AppButton>
            <AppButton aria-label="Outlook" $open><OutlookIcon /></AppButton>
            <AppButton aria-label="Word" $active><WordIcon size={30} /></AppButton>
          </Apps>
          <Tray>
            <IconButton aria-label="Outlook"><OutlookIcon size={18} /></IconButton>
            <IconButton $ml={20} aria-label="McAfee"><McAfeeIcon /></IconButton>
            <IconButton $ml={20} aria-label="Windows Security"><ShieldIcon /></IconButton>
            <IconButton $ml={20} aria-label="Wi-Fi"><WifiIcon /></IconButton>
            <IconButton $ml={9} aria-label="Volume"><SoundIcon /></IconButton>
            <IconButton $ml={9} aria-label="Battery"><BatteryIcon /></IconButton>
            <Clock>
              <Stack>
                <span>3:19 PM</span>
                <span>2/9/2024</span>
              </Stack>
            </Clock>
            <IconButton $w={17} aria-label="Notifications"><BellIcon /></IconButton>
          </Tray>
        </Taskbar>
      </Desktop>
    </>
  );
}
